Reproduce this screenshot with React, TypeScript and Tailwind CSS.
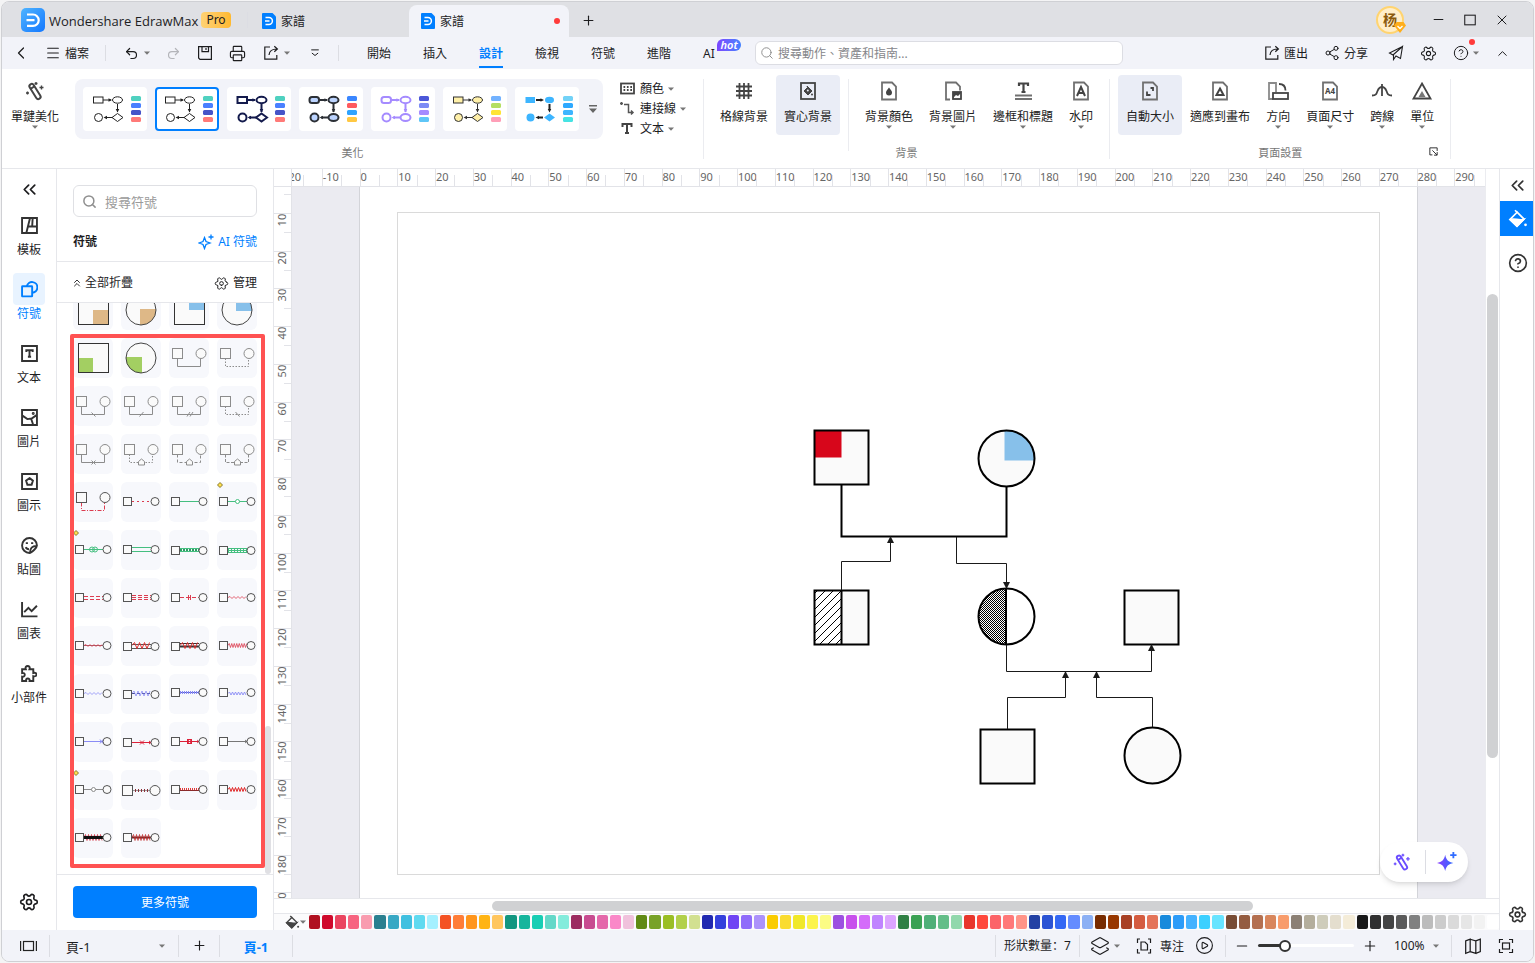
import { useState } from "react";
import type { ReactNode } from "react";
import {
  ChevronLeft,
  ChevronUp,
  ChevronsLeft,
  ChevronsUp,
  CircleHelp,
  CirclePlay,
  Layers2,
  Menu,
  Minus,
  Plus,
  Printer,
  Redo2,
  Search,
  Settings,
  Share2,
  Undo2,
  X,
} from "lucide-react";
import clsx from "clsx";

/* ---------- small drawings ---------- */

type IconProps = { children: ReactNode; size?: number; width?: number; className?: string };

function Icon({ children, size = 16, width = 1.2, className }: IconProps) {
  return (
    <svg
      width={size}
      height={size}
      viewBox="0 0 16 16"
      fill="none"
      stroke="currentColor"
      strokeWidth={width}
      className={clsx("shrink-0", className)}
    >
      {children}
    </svg>
  );
}

function Caret({ className }: { className?: string }) {
  return (
    <svg width="6" height="4" viewBox="0 0 6 4" className={clsx("shrink-0 fill-[#777]", className)}>
      <path d="M0 0.5h6L3 3.8z" />
    </svg>
  );
}

function Divider({ className }: { className?: string }) {
  return <div className={clsx("w-px shrink-0 bg-[#dcdde3]", className)} />;
}

function DocIcon() {
  return (
    <svg width="14" height="16" viewBox="0 0 14 16" className="shrink-0">
      <path d="M1 0h9.5L14 3.5V15a1 1 0 0 1-1 1H1a1 1 0 0 1-1-1V1a1 1 0 0 1 1-1z" fill="#007fff" />
      <path d="M3.5 4.6H7a3.4 3.4 0 0 1 0 6.800H3.500M3 8h4.500" fill="none" stroke="#fff" strokeWidth="1.500" />
    </svg>
  );
}

function WandIcon({ size = 24 }: { size?: number }) {
  return (
    <svg width={size} height={size} viewBox="0 0 24 24" fill="none" stroke="currentColor" strokeWidth="2">
      <rect x="9.700" y="4" width="4.600" height="17" rx="2.300" transform="rotate(-32 12 12.500)" />
      <path d="M7.600 9.800l3.600-2.300" />
      <path d="M13 3v3M11.500 4.500h3M18.500 6.500v4M16.500 8.500h4M4.500 12.500v3M3 14h3" strokeWidth="1.400" />
    </svg>
  );
}

function ExportIcon() {
  return (
    <Icon>
      <path d="M7 2H1.800v12.200h12V10" />
      <path d="M6 10c.3-4 3-6 8-6M11.300 1.200L14.400 4l-3.100 2.800" />
    </Icon>
  );
}

function BucketIcon({ size = 18 }: { size?: number }) {
  return (
    <Icon size={size} width={1.4}>
      <path d="M5.600 1l2 2" />
      <path d="M7.300 2.600L1.600 8.300l5.600 5.500 5.600-5.700z" />
      <path d="M1.800 8.400c3-1 7 1 10.600 0l-5.200 5.200z" fill="currentColor" />
      <circle cx="14" cy="12.600" r="1.100" fill="currentColor" stroke="none" />
    </Icon>
  );
}

const ribbonIcons: Record<string, ReactNode> = {
  grid: <path d="M7.500 4v16M12 4v16M16.500 4v16M4 7.500h16M4 12h16M4 16.500h16" strokeWidth="1.800" />,
  solid: (
    <>
      <rect x="5" y="4" width="14" height="16" />
      <path d="M11 7l5 5-4 4-4-4 3.500-3.500z" fill="currentColor" strokeWidth="1" />
      <circle cx="11.800" cy="11.500" r="1" fill="#eaedf6" stroke="none" />
      <circle cx="16" cy="15.500" r="1" fill="currentColor" stroke="none" />
    </>
  ),
  color: (
    <>
      <path d="M5 3.500h10l4 4v13H5z" stroke="#707070" />
      <path d="M12 8.500c2 2.600 3 3.600 3 5a3 3 0 0 1-6 0c0-1.400 1-2.400 3-5z" fill="currentColor" stroke="none" />
    </>
  ),
  image: (
    <>
      <path d="M9 20.500H5v-17h10l4 4v4" stroke="#707070" />
      <rect x="12" y="13" width="8" height="7" />
      <path d="M12 19l3-3 2 1 3-3v-1h-8z" fill="currentColor" stroke="none" />
    </>
  ),
  border: (
    <>
      <path d="M8 7V4.500h9V7M12.500 4.500v9M10.500 13h4" strokeWidth="2.200" />
      <path d="M4 16.500h17M4 20h17" stroke="#707070" />
    </>
  ),
  mark: (
    <>
      <path d="M5 3.500h10l4 4v13H5z" stroke="#707070" />
      <path d="M8 17l4-9 4 9M9.500 14h5" strokeWidth="2" />
    </>
  ),
  auto: (
    <>
      <path d="M5 3.500h10l4 4v13H5z" stroke="#707070" />
      <path d="M12.500 9H15v3M9 12.500V16h3.500" strokeWidth="1.800" />
    </>
  ),
  fit: (
    <>
      <path d="M5 3.500h10l4 4v13H5z" stroke="#707070" />
      <path d="M12 9.500l3.500 6.500h-7z" strokeWidth="2" />
    </>
  ),
  orient: (
    <>
      <path d="M7 20H3V4h7v9" stroke="#8a8a8a" />
      <rect x="7" y="14" width="15" height="6" />
      <path d="M13 5c4 0 6.500 2.500 6.500 6.500" />
    </>
  ),
  wave: <path d="M2 16.500c4 0 4.500-1.500 5.500-4.500C8.500 9.500 10 8 12 8s3.500 1.500 4.500 4c1 3 1.500 4.500 5.500 4.500M12 5v12" />,
  unit: (
    <>
      <path d="M12 4.500L20.500 19.500h-17z" />
      <path d="M12 12l3.500 6h-7z" fill="#777" stroke="none" />
    </>
  ),
};

function RibbonIcon({ name }: { name: string }) {
  if (name === "wand") return <WandIcon />;
  if (name === "size") {
    return (
      <svg width="24" height="24" viewBox="0 0 24 24" fill="none" stroke="#707070" strokeWidth="1.8">
        <path d="M5 3.500h10l4 4v13H5z" />
        <text x="7" y="15" fontSize="8" fontWeight="700" fill="#444" stroke="none">
          A4
        </text>
      </svg>
    );
  }
  return (
    <svg width="24" height="24" viewBox="0 0 24 24" fill="none" stroke="currentColor" strokeWidth="1.8">
      {ribbonIcons[name]}
    </svg>
  );
}

/* ---------- title bar ---------- */

function TitleBar() {
  return (
    <header className="flex h-[35px] shrink-0 items-center bg-[#dfe0e4] pl-[19px] pr-[19px]">
      <svg width="24" height="24" viewBox="0 0 24 24" className="shrink-0">
        <defs>
          <linearGradient id="logo" x1="0" y1="0" x2="1" y2="1">
            <stop offset="0" stopColor="#4fb4ff" />
            <stop offset="1" stopColor="#1478ff" />
          </linearGradient>
        </defs>
        <rect width="24" height="24" rx="5" fill="url(#logo)" />
        <path d="M6 6.500h6a5.700 5.700 0 0 1 0 11.400H6M5.500 12.200h8" fill="none" stroke="#fff" strokeWidth="2.200" />
      </svg>
      <span className="ml-1 w-36 whitespace-nowrap pt-0.5 font-['Open_Sans',sans-serif] text-[13px]">
        Wondershare EdrawMax
      </span>
      <span className="ml-2 flex h-4 w-[30px] items-center justify-center rounded-sm bg-linear-to-r from-[#fed273] to-[#ffb92e]">
        Pro
      </span>
      <Divider className="ml-4 h-4 bg-[#c8c9ce]" />
      <button className="flex w-[161px] items-center gap-[5px] pl-[14px] pt-0.5">
        <DocIcon />
        <span className="pt-0.5">家譜</span>
      </button>
      <button className="flex h-8 w-40 items-center gap-[5px] self-end rounded-t-lg bg-[#f2f3f9] pl-3 pr-[9px]">
        <DocIcon />
        <span className="pt-0.5">家譜</span>
        <span className="ml-auto size-1.5 rounded-full bg-[#ff3b3b]" />
      </button>
      <button aria-label="New tab" className="ml-3 pt-0.5">
        <Plus size={15} strokeWidth={1.8} />
      </button>
      <div className="ml-auto flex items-center">
        <button className="relative mr-[18px] flex size-7 items-center justify-center rounded-full border-2 border-[#ffd470] bg-[#ffeec9] text-[14px] font-bold text-[#8a5a0c]">
          杨
          <svg width="12" height="11" viewBox="0 0 12 11" className="absolute -bottom-px -right-1">
            <path d="M2.500 0h7L12 3.500 6 11 0 3.500z" fill="#ffae1a" />
            <path d="M3.500 4L6 6.500 8.500 4" fill="none" stroke="#fff" strokeWidth="1.300" />
          </svg>
        </button>
        <button aria-label="Minimize" className="flex w-8 justify-center">
          <Minus size={15} strokeWidth={1.6} />
        </button>
        <button aria-label="Maximize" className="flex w-8 justify-center">
          <Icon size={14} width={1.2}>
            <rect x="2" y="2.500" width="12" height="11" />
          </Icon>
        </button>
        <button aria-label="Close" className="-mr-1 flex w-8 justify-center">
          <X size={16} strokeWidth={1.5} />
        </button>
      </div>
    </header>
  );
}

/* ---------- menu bar ---------- */

const menus = ["開始", "插入", "設計", "檢視", "符號", "進階", "AI"];

function MenuBar() {
  const [active, setActive] = useState("設計");

  return (
    <div className="flex h-8 shrink-0 items-center bg-[#f2f3f9] pl-[11px] pr-[23px]">
      <button aria-label="Back" className="flex w-4 justify-center">
        <ChevronLeft size={20} strokeWidth={1.5} className="shrink-0" />
      </button>
      <button className="ml-4 flex items-center gap-1">
        <Menu size={16} strokeWidth={1.6} />
        <span className="pt-0.5">檔案</span>
      </button>
      <Divider className="ml-4 h-4" />
      <div className="flex w-[232px] items-center">
        <button aria-label="Undo" className="ml-[18px] flex items-center gap-[5px]">
          <Undo2 size={15} strokeWidth={1.9} />
          <Caret />
        </button>
        <button aria-label="Redo" className="ml-4 text-[#b4b5ba]">
          <Redo2 size={15} strokeWidth={1.9} />
        </button>
        <button aria-label="Save" className="ml-4">
          <Icon>
            <path d="M1.600 1.600h12.800v12.800H3L1.600 13zM5 1.600v5h6.500v-5M9 3v2" />
          </Icon>
        </button>
        <button aria-label="Print" className="ml-4">
          <Printer size={17} strokeWidth={1.6} />
        </button>
        <button aria-label="Export" className="ml-[17px] flex items-center gap-[5px]">
          <ExportIcon />
          <Caret />
        </button>
        <button aria-label="More" className="ml-5">
          <Icon size={10} width={1.6}>
            <path d="M2 3h12M3 8l5 4 5-4" />
          </Icon>
        </button>
      </div>
      <Divider className="h-4" />
      <nav className="ml-3 flex h-full w-[404px]">
        {menus.map((item) => (
          <button
            key={item}
            onClick={() => setActive(item)}
            className={clsx(
              "relative flex h-full items-center px-4 pt-0.5",
              item === active && "font-bold text-[#007fff]"
            )}
          >
            {item}
            {item === active && <span className="absolute inset-x-4 bottom-px h-0.5 bg-[#007fff]" />}
            {item === "AI" && (
              <span className="absolute left-[30px] top-0.5 flex h-3 w-6 items-center justify-center rounded-t-full rounded-br-full bg-linear-to-r from-[#7a45ff] to-[#3f80ff] text-[11px] font-semibold italic text-white">
                hot
              </span>
            )}
          </button>
        ))}
      </nav>
      <label className="flex h-6 w-[368px] items-center gap-1 rounded-md border border-[#dcdde3] bg-white px-1">
        <Search size={14} strokeWidth={1.6} className="text-[#8a8a8a]" />
        <input
          aria-label="搜尋"
          placeholder="搜尋動作、資產和指南..."
          className="min-w-0 flex-1 pt-0.5 outline-none placeholder:text-[#85868a]"
        />
      </label>
      <div className="ml-auto flex items-center">
        <button className="flex items-center gap-1">
          <ExportIcon />
          <span className="pt-0.5">匯出</span>
        </button>
        <button className="ml-4 flex items-center gap-1">
          <Share2 size={16} strokeWidth={1.5} />
          <span className="pt-0.5">分享</span>
        </button>
        <button aria-label="Send" className="ml-5">
          <Icon>
            <path d="M14.500 1.500L1.500 8l3.500 2 9.500-8.500-2 12-4.500-2.500-2.500 3.500v-4.500" strokeWidth="1.100" />
          </Icon>
        </button>
        <button aria-label="Settings" className="ml-4">
          <Settings size={17} strokeWidth={1.5} className="rotate-90" />
        </button>
        <button aria-label="Help" className="relative ml-4 flex items-center gap-1">
          <CircleHelp size={16} strokeWidth={1.5} />
          <Caret />
          <span className="absolute -top-1.5 right-1 size-1.5 rounded-full bg-[#ff3b3b]" />
        </button>
        <button aria-label="Collapse ribbon" className="ml-4">
          <ChevronUp size={15} strokeWidth={1.6} />
        </button>
      </div>
    </div>
  );
}

/* ---------- ribbon ---------- */

type Theme = { line: string; fill: string; width: number; swatches: string[]; round?: boolean; solid?: boolean };

const themes: Theme[] = [
  { line: "#222", fill: "#fff", width: 1, swatches: ["#4fd1c0", "#4a80ff", "#4654c8", "#ff7a78"] },
  { line: "#222", fill: "#fff", width: 1, swatches: ["#4fd1c0", "#4a80ff", "#4654c8", "#ff7a78"] },
  { line: "#141b4d", fill: "#fff", width: 2, swatches: ["#4fd1c0", "#4a80ff", "#4654c8", "#ff7a78"] },
  { line: "#2c3036", fill: "#bcd4ff", width: 2, swatches: ["#3a86ff", "#ff5a5f", "#2ea3ff", "#ffc843"], round: true },
  { line: "#a58bff", fill: "#fff", width: 2, swatches: ["#4b57d8", "#7d8cf5", "#a58bff", "#5fc6f7"], round: true },
  { line: "#333", fill: "#fff0a8", width: 1, swatches: ["#72b2ff", "#b4df62", "#ffe436", "#ff9fb8"] },
  { line: "#222", fill: "#3db5ff", width: 2, swatches: ["#72d2f7", "#2ea9ff", "#3db5ff", "#46e3e3"], solid: true },
];

function ThemePreview({ line, fill, width, swatches, round, solid }: Theme) {
  return (
    <svg width="60" height="40" viewBox="2 2 60 40">
      <g stroke={line} strokeWidth={width} fill="none">
        <path d={solid ? "M21 13h5M34.500 17v5M28 30.500h-5" : "M20 13h8M34.500 17v8M30 30.500h-8"} />
      </g>
      <g fill={line}>
        <path d="M25.500 11.200l3.500 1.800-3.500 1.800zM32.700 22l1.800 3.500 1.800-3.500zM24 28.700l-3.500 1.800 3.500 1.800z" />
      </g>
      <g stroke={solid ? "none" : line} strokeWidth={width} fill={fill}>
        <rect x="10.500" y="10" width="9.500" height="6" rx={round ? 2.5 : 0} />
        <ellipse cx="34.500" cy="13" rx={solid ? 4.5 : 5} ry="3.200" />
        <circle cx="15.500" cy="30.500" r="4" />
        {round ? <ellipse cx="34.500" cy="30.500" rx="5" ry="3.500" /> : <path d="M34.500 26.500l5.500 4-5.500 4-5.500-4z" />}
      </g>
      {swatches.map((color, i) => (
        <rect key={i} x="48" y={9 + i * 7} width="10" height="5" rx="1.500" fill={color} />
      ))}
    </svg>
  );
}

type RibbonButtonProps = { icon: string; label: string; caret?: boolean; active?: boolean; className?: string };

function RibbonButton({ icon, label, caret, active, className }: RibbonButtonProps) {
  return (
    <button
      className={clsx(
        "flex h-[60px] shrink-0 flex-col items-center rounded px-2 pt-1 text-[#222]",
        active && "bg-[#eaedf6]",
        className
      )}
    >
      <span className="flex h-6 items-center text-[#444]">
        <RibbonIcon name={icon} />
      </span>
      <span className="mt-1.5 whitespace-nowrap">{label}</span>
      {caret && <Caret />}
    </button>
  );
}

function GroupLabel({ children }: { children: ReactNode }) {
  return <div className="mt-2.5 text-center text-[11px] leading-4 text-[#777]">{children}</div>;
}

function Ribbon() {
  const [theme, setTheme] = useState(1);

  return (
    <div className="flex h-[100px] shrink-0 border-b border-[#e6e7eb] bg-white pt-1.5">
      <section className="w-[701px] shrink-0">
        <div className="flex h-[60px]">
          <RibbonButton icon="wand" label="單鍵美化" caret className="w-[66px]" />
          <div className="ml-[7px] mt-1 flex h-[60px] items-center gap-2 rounded-lg bg-[#f2f3f9] pl-2">
            {themes.map((item, i) => (
              <button
                key={i}
                aria-label={`Theme ${i + 1}`}
                onClick={() => setTheme(i)}
                className={clsx("h-11 w-16 rounded border-2 bg-white", i === theme ? "border-[#007fff]" : "border-white")}
              >
                <ThemePreview {...item} />
              </button>
            ))}
            <button aria-label="More themes" className="flex w-4 justify-center pr-1">
              <svg width="8" height="8" viewBox="0 0 8 8" fill="#666">
                <path d="M0 0h8v1.500H0zM0 3.500h8L4 8z" />
              </svg>
            </button>
          </div>
          <div className="ml-[17px] mt-1">
            <button className="flex h-5 items-center">
              <Icon className="mr-1 text-[#444]" width={1.8}>
                <rect x="1" y="2.500" width="13" height="10" />
                <path d="M3.500 6h8.500M3.500 9h8.500" strokeDasharray="1.700 1.700" />
              </Icon>
              顏色
              <Caret className="ml-1" />
            </button>
            <button className="flex h-5 items-center">
              <Icon className="mr-1 text-[#555]" width={1.5}>
                <path d="M4 3.500h4.500v8H13M11 9.500l2 2-2 2" />
                <path d="M0 2.500h3M1.500 1v3" />
              </Icon>
              連接線
              <Caret className="ml-1" />
            </button>
            <button className="flex h-5 items-center">
              <Icon className="mr-1 text-[#444]" width={2}>
                <path d="M2.500 6V3h9v3M7 3v9.500M5 12h4" />
              </Icon>
              文本
              <Caret className="ml-1" />
            </button>
          </div>
        </div>
        <GroupLabel>美化</GroupLabel>
      </section>
      <Divider className="mt-1 h-20 bg-[#ebecf0]" />
      <section className="shrink-0">
        <div className="flex px-2">
          <RibbonButton icon="grid" label="格線背景" />
          <RibbonButton icon="solid" label="實心背景" active />
          <Divider className="-mb-4 mx-2 mt-1 bg-[#ebecf0]" />
          <RibbonButton icon="color" label="背景顏色" caret />
          <RibbonButton icon="image" label="背景圖片" caret />
          <RibbonButton icon="border" label="邊框和標題" caret />
          <RibbonButton icon="mark" label="水印" caret />
        </div>
        <GroupLabel>背景</GroupLabel>
      </section>
      <Divider className="mt-1 h-20 bg-[#ebecf0]" />
      <section className="relative shrink-0">
        <div className="flex px-2">
          <RibbonButton icon="auto" label="自動大小" active />
          <RibbonButton icon="fit" label="適應到畫布" />
          <RibbonButton icon="orient" label="方向" caret />
          <RibbonButton icon="size" label="頁面尺寸" caret />
          <RibbonButton icon="wave" label="跨線" caret />
          <RibbonButton icon="unit" label="單位" caret />
        </div>
        <GroupLabel>頁面設置</GroupLabel>
        <button aria-label="Page setup" className="absolute bottom-3 right-3">
          <Icon size={9} width={1.6}>
            <path d="M6 14H1.500V1.500h13V7M6 6l8 8M14.500 9v5.500H9" />
          </Icon>
        </button>
      </section>
      <Divider className="mt-1 h-20 bg-[#ebecf0]" />
    </div>
  );
}

/* ---------- left rail ---------- */

const railItems: { label: string; icon: ReactNode }[] = [
  {
    label: "模板",
    icon: <path d="M1 1h14v14H1zM8.500 1L5 15M6.500 9H15M11 1L10.500 9" />,
  },
  {
    label: "符號",
    icon: (
      <>
        <rect x="1" y="5" width="9.500" height="9.500" rx="0.500" />
        <path d="M5.500 5a5 5 0 1 1 5 6" />
      </>
    ),
  },
  {
    label: "文本",
    icon: <path d="M1 1h14v14H1zM5 6.500V5h6v1.500M8 5v6M6.500 11h3" />,
  },
  {
    label: "圖片",
    icon: (
      <>
        <path d="M1 1h14v14H1zM1 6l5 3.500L10 9l5-3.500M9.500 9l2 6" />
        <circle cx="11.500" cy="4.200" r="0.500" fill="currentColor" />
      </>
    ),
  },
  {
    label: "圖示",
    icon: <path d="M1 1h14v14H1zM8 4.800l3.200 2.400-1.200 3.800H6L4.800 7.200z" />,
  },
  {
    label: "貼圖",
    icon: (
      <>
        <path d="M15 8a7 7 0 1 0-7 7c1 0 2.500-1 4.500-3S15 9 15 8zM8.500 14.500c0-4 2-6 6-6M4.500 9.500c.5 1.500 1.500 2 3 2" />
        <path d="M5.500 5v1.500M10.500 5v1.500" strokeWidth="2" />
      </>
    ),
  },
  {
    label: "圖表",
    icon: <path d="M1 1v13.500h14.500M3 10.500l4-4 3 3L15 4.500" />,
  },
  {
    label: "小部件",
    icon: (
      <path d="M2 4h3.500c-.8-2 .3-3 1.700-3s2.500 1 1.700 3h3.600v3.500c2-.5 3 .3 3 1.500s-1 2-3 1.600V15H9c.3-1.500-.5-2.300-1.700-2.300S5.500 13.500 5.800 15H2v-4c1.600.3 2.500-.6 2.500-1.800S3.600 7.300 2 7.600z" />
    ),
  },
];

function LeftRail() {
  const [active, setActive] = useState("符號");

  return (
    <aside className="flex w-[55px] shrink-0 flex-col items-center border-r border-[#e6e7eb] bg-white">
      <button aria-label="Collapse" className="flex h-10 items-center">
        <ChevronsLeft size={21} strokeWidth={2} />
      </button>
      {railItems.map(({ label, icon }) => (
        <button
          key={label}
          onClick={() => setActive(label)}
          className={clsx("flex h-16 flex-col items-center", active === label && "text-[#007fff]")}
        >
          <span
            className={clsx(
              "mb-px flex size-8 items-center justify-center rounded",
              active === label ? "bg-[#e8f3ff]" : "text-[#333]"
            )}
          >
            <Icon size={17} width={1.8}>
              {icon}
            </Icon>
          </span>
          {label}
        </button>
      ))}
      <button aria-label="Settings" className="mb-3 mt-auto flex size-8 items-center justify-center">
        <Settings size={20} strokeWidth={2} className="rotate-90" />
      </button>
    </aside>
  );
}

/* ---------- symbol library ---------- */

const RED = "#dc3d50";
const GREEN = "#45bf80";
const VIOLET = "#8a8cf5";
const GREY = "#8c8c8c";

function zigzag(x1: number, x2: number, y: number, step: number, amp: number) {
  let d = `M${x1} ${y}`;
  let up = true;
  for (let x = x1 + step; x <= x2; x += step) {
    d += `L${x} ${y + (up ? -amp : amp)}`;
    up = !up;
  }
  return d;
}

// quarter-filled square or circle
function Quarter({ round, color, at }: { round?: boolean; color: string; at: "br" | "tr" | "bl" }) {
  const x = at === "bl" ? 5 : 20;
  const y = at === "tr" ? 5 : 20;
  const arcs = {
    br: "M19 19h16A15 15 0 0 1 19 35z",
    tr: "M19 21V5A15 15 0 0 1 35 21z",
    bl: "M21 19H5A15 15 0 0 0 21 35z",
  };
  return round ? (
    <>
      <circle cx="20" cy="20" r="15" fill="#fafafa" />
      <path d={arcs[at]} fill={color} />
      <circle cx="20" cy="20" r="15" fill="none" stroke="#444" />
    </>
  ) : (
    <>
      <rect x="5.500" y="5.500" width="30" height="29" fill="#fafafa" />
      <rect x={x} y={y} width="15" height="15" fill={color} />
      <rect x="5.500" y="5.500" width="30" height="29" fill="none" stroke="#333" />
    </>
  );
}

type ElbowProps = { color?: string; dash?: string; mark?: ReactNode; dark?: boolean };

function Elbow({ color = GREY, dash, mark, dark }: ElbowProps) {
  const outline = dark ? "#555" : GREY;
  return (
    <g fill="none">
      <path d="M8.500 20.500v8h23v-8" stroke={color} strokeDasharray={dash} />
      <rect x="3.500" y="10.500" width="10" height="10" stroke={outline} fill="#fafafa" />
      <circle cx="32" cy="15.500" r="5" stroke={outline} fill="#fafafa" />
      {mark}
    </g>
  );
}

function House() {
  return <path d="M17.500 31v-3.500l3-2.500 3 2.500V31z" stroke={GREY} fill="#fafafa" />;
}

function Link({ children, handle, big, y = 19 }: { children: ReactNode; handle?: boolean; big?: boolean; y?: number }) {
  const r = big ? 5 : 4;
  return (
    <g fill="none">
      {children}
      <rect x={6.5 - r} y={y + 0.5 - r} width={r * 2} height={r * 2} stroke="#555" fill="#fafafa" />
      <circle cx="34" cy={y + 0.5} r={r} stroke="#555" fill="#fafafa" />
      {handle && <path d="M3 0.500L5.500 3 3 5.500 0.500 3z" stroke="#6b5a10" strokeWidth="0.800" fill="#ffe04d" />}
    </g>
  );
}

function Line({ color, y = 19.5, dash, width = 1 }: { color: string; y?: number; dash?: string; width?: number }) {
  return <path d={`M11 ${y}h19`} stroke={color} strokeDasharray={dash} strokeWidth={width} />;
}

function Zig({ color, step = 2, amp = 1, width = 1 }: { color: string; step?: number; amp?: number; width?: number }) {
  return <path d={zigzag(11, 30, 19.5, step, amp)} stroke={color} strokeWidth={width} />;
}

const symbols: ReactNode[] = [
  <Quarter color="#deb887" at="br" />,
  <Quarter round color="#deb887" at="br" />,
  <Quarter color="#87c0ea" at="tr" />,
  <Quarter round color="#87c0ea" at="tr" />,

  <Quarter color="#a3cf62" at="bl" />,
  <Quarter round color="#a3cf62" at="bl" />,
  <Elbow />,
  <Elbow dash="1.500 1.500" />,

  <Elbow mark={<path d="M18.500 26.500l4 4" stroke={GREY} />} />,
  <Elbow mark={<path d="M22.500 26l-4 4.500" stroke={GREY} />} />,
  <Elbow mark={<path d="M21 26l-3 4.500M24 26l-3 4.500" stroke={GREY} />} />,
  <Elbow dash="1.500 1.500" mark={<path d="M18.500 26l4 4.500" stroke={GREY} />} />,

  <Elbow mark={<path d="M18.500 26.500l4 4M22.500 26.500l-4 4" stroke={GREY} />} />,
  <Elbow dash="1.500 1.500" mark={<House />} />,
  <Elbow dash="3 2" mark={<House />} />,
  <Elbow dash="3 1.500" mark={<House />} />,

  <Elbow dark color={RED} dash="4 1.500 1 1.500" />,
  <Link><Line color={RED} dash="2 3" /></Link>,
  <Link><Line color={GREEN} /></Link>,
  <Link handle>
    <Line color={GREEN} />
    <circle cx="20.500" cy="19.500" r="2" stroke={GREEN} fill="#fff" />
  </Link>,

  <Link handle>
    <Line color={GREEN} />
    <circle cx="19" cy="19.500" r="2.500" stroke={GREEN} />
    <circle cx="22" cy="19.500" r="2.500" stroke={GREEN} />
  </Link>,
  <Link><Line color={GREEN} y={17.5} /><Line color={GREEN} y={21.5} /></Link>,
  <Link y={20}>
    <Line color={GREEN} y={18.5} /><Line color={GREEN} y={21.5} />
    <Line color="#2d9c63" y={20} dash="2 1" width={2} />
  </Link>,
  <Link y={20}>
    <Line color={GREEN} y={18.5} /><Line color={GREEN} y={20.5} /><Line color={GREEN} y={22.5} />
    <Line color={GREEN} y={20.5} dash="1 2" width={4} />
  </Link>,

  <Link><Line color={RED} y={18.5} dash="4 2" /><Line color={RED} y={21.5} dash="4 2" /></Link>,
  <Link>
    <Line color={RED} y={17.5} dash="4 2" /><Line color={RED} y={19.5} dash="4 2" /><Line color={RED} y={21.5} dash="4 2" />
  </Link>,
  <Link><Line color={RED} dash="4 2" /><path d="M19.500 17v5M21.500 17v5" stroke={RED} /></Link>,
  <Link><Zig color={RED} width={0.8} /></Link>,

  <Link><Line color="#a06068" /><Zig color={RED} width={0.8} /></Link>,
  <Link y={20}>
    <Line color="#555" y={18.5} /><Line color="#555" y={22.5} /><Zig color="#e03030" step={2.5} amp={3} />
  </Link>,
  <Link y={20}>
    <Line color="#333" y={17.5} /><Line color="#333" y={20.5} width={2} /><Zig color="#e03030" step={2.5} amp={3} />
  </Link>,
  <Link><Zig color={RED} step={1.25} amp={2} width={0.8} /></Link>,

  <Link><Zig color={VIOLET} width={0.8} /></Link>,
  <Link y={20}><Line color="#444a90" dash="3 2" /><Zig color={VIOLET} step={2} amp={2.5} width={0.8} /></Link>,
  <Link y={18}><Line color="#5a60d0" y={18.5} /><Line color={VIOLET} y={18.5} dash="1 1" width={3} /></Link>,
  <Link y={18}><Zig color={VIOLET} step={1.5} amp={1.5} width={0.9} /></Link>,

  <Link><Line color={VIOLET} /><path d="M27 17.500l3 4M30 17.500l-3 4" stroke={VIOLET} /></Link>,
  <Link y={20}>
    <Line color="#dc2038" y={20.5} />
    <path d="M19 18.500l4 4M23 18.500l-4 4M28 19l2 1.500-2 1.500" stroke="#dc2038" />
  </Link>,
  <Link>
    <Line color="#dc2038" />
    <rect x="18.500" y="17.500" width="4" height="4" stroke="#dc2038" />
    <path d="M18.500 17.500l4 4M22.500 17.500l-4 4M28 18l2 1.500-2 1.500" stroke="#dc2038" strokeWidth="0.800" />
  </Link>,
  <Link><Line color="#777" /><path d="M28 18l2 1.500-2 1.500" stroke="#777" /></Link>,

  <Link handle><Line color={GREY} /><circle cx="20.500" cy="19.500" r="2" stroke={GREY} fill="#fff" /></Link>,
  <Link big y={20}><Line color="#999" y={20.5} /><Line color="#8a3038" y={20.5} dash="1 2" width={3} /></Link>,
  <Link><Line color="#e03a3a" dash="1 1" width={3} /><Line color="#8a2a2a" y={20.5} /></Link>,
  <Link><Zig color="#e02020" step={1.5} amp={2} /></Link>,

  <Link><Zig color="#d03040" step={1.5} amp={3} width={0.8} /><Line color="#111" width={3} /></Link>,
  <Link><Line color="#6a2525" width={2} /><Zig color="#c03030" step={1.5} amp={3} width={0.8} /></Link>,
];

function SymbolPanel() {
  return (
    <aside className="flex w-[217px] shrink-0 flex-col border-r border-[#e6e7eb] bg-white">
      <div className="px-4 pt-4">
        <label className="flex h-8 items-center gap-2 rounded-md border border-[#dfe0e4] px-2">
          <Search size={15} strokeWidth={2.4} className="text-[#8f8f8f]" />
          <input
            aria-label="搜尋符號"
            placeholder="搜尋符號"
            className="min-w-0 flex-1 pt-0.5 text-[13px] outline-none placeholder:text-[#9a9a9a]"
          />
        </label>
      </div>
      <div className="flex h-[45px] items-center justify-between border-b border-[#e6e7eb] px-4 pt-1.5">
        <h2 className="font-bold">符號</h2>
        <button className="flex items-center gap-1 text-[#007fff]">
          <Icon width={1.3}>
            <path d="M6.500 3.500L8 7.500l4 1.500-4 1.500-1.500 4L5 10.500 1 9l4-1.500z" />
            <path d="M13 0.500v5M10.500 3h5" />
          </Icon>
          AI 符號
        </button>
      </div>
      <div className="flex h-[41px] shrink-0 items-center justify-between border-b border-[#e6e7eb] px-4 pt-0.5">
        <button className="flex items-center gap-0.5">
          <ChevronsUp size={12} strokeWidth={1.8} className="-ml-0.5" />
          全部折疊
        </button>
        <button className="flex items-center gap-1">
          <Settings size={15} strokeWidth={1.6} className="rotate-90" />
          管理
        </button>
      </div>
      <div className="relative min-h-0 flex-1 overflow-hidden">
        <div className="-mt-[13px] grid grid-cols-4 gap-2 px-4">
          {symbols.map((symbol, i) => (
            <button key={i} aria-label={`Symbol ${i + 1}`} className="size-10 rounded-md bg-[#f7f8fc]">
              <svg width="40" height="40" viewBox="0 0 40 40">
                {symbol}
              </svg>
            </button>
          ))}
        </div>
        <div className="absolute left-[13px] right-2 top-[31px] h-[534px] rounded-xs border-4 border-[#ff5252]" />
        <div className="absolute bottom-0 right-0.5 h-[148px] w-1.5 rounded-full bg-[#e0e0e4]" />
      </div>
      <div className="border-t border-[#e6e7eb] px-4 pb-3 pt-[11px]">
        <button className="h-8 w-full rounded bg-[#007fff] pt-0.5 text-white">更多符號</button>
      </div>
    </aside>
  );
}

/* ---------- canvas ---------- */

const columns = Array.from({ length: 32 }, (_, i) => (i - 2) * 10);
const rows = Array.from({ length: 20 }, (_, i) => i * 10);

function HorizontalRuler() {
  return (
    <div className="flex h-[18px] shrink-0 overflow-hidden border-b border-[#e2e3e8] bg-white">
      <div className="-ml-2 -mr-[7px] flex min-w-0 flex-1">
        {columns.map((n) => (
          <div key={n} className="flex min-w-0 flex-1 border-l border-[#e2e3e8]">
            <span className="w-1/2 whitespace-nowrap text-[11px] leading-4 text-[#666]">{n}</span>
            <span className="mt-1.5 flex-1 border-l border-[#e2e3e8]" />
          </div>
        ))}
      </div>
    </div>
  );
}

function VerticalRuler() {
  return (
    <div className="flex w-[18px] shrink-0 flex-col overflow-hidden border-r border-[#e2e3e8] bg-white">
      <div className="z-10 h-[18px] shrink-0 border-b border-[#e2e3e8] bg-white" />
      <div className="flex min-h-0 flex-1 flex-col overflow-hidden">
        <div className="-mb-8 -mt-3 flex min-h-0 flex-1 flex-col">
          {rows.map((n) => (
            <div key={n} className="flex min-h-0 flex-1 flex-col border-t border-[#e2e3e8]">
              <span className="h-1/2 rotate-180 self-start text-right text-[11px] leading-4 text-[#666] [writing-mode:vertical-rl]">
                {n > 0 && n}
              </span>
              <span className="ml-2.5 flex-1 border-t border-[#e2e3e8]" />
            </div>
          ))}
        </div>
      </div>
    </div>
  );
}

function FamilyTree() {
  return (
    <svg width="440" height="400" viewBox="780 410 440 400" fill="none" className="absolute left-[420px] top-[223px]">
      <defs>
        <pattern id="hatch" width="8" height="8" patternUnits="userSpaceOnUse">
          <path d="M-1 9L9 -1M-1 1L1 -1M7 9L9 7" stroke="#000" strokeWidth="1" />
        </pattern>
        <pattern id="checker" width="2" height="2" patternUnits="userSpaceOnUse">
          <rect width="2" height="2" fill="#fff" />
          <rect width="1" height="1" fill="#000" />
          <rect x="1" y="1" width="1" height="1" fill="#000" />
        </pattern>
      </defs>

      {/* fills */}
      <g fill="#fafafa">
        <rect x="814" y="430" width="55" height="55" />
        <circle cx="1006.500" cy="458.500" r="28" />
        <rect x="814" y="590" width="55" height="55" />
        <rect x="1124" y="590" width="55" height="55" />
        <rect x="980" y="729" width="55" height="55" />
        <circle cx="1152.500" cy="755.500" r="28" />
      </g>
      <rect x="815" y="431" width="26.500" height="26.500" fill="#d7061b" />
      <path d="M1004.500 460.500v-30a28 28 0 0 1 30 30z" fill="#87c0ea" />
      <rect x="815" y="591" width="26.500" height="53" fill="#fff" />
      <rect x="815" y="591" width="26.500" height="53" fill="url(#hatch)" />
      <path d="M1006 588.500a28 28 0 0 0 0 56z" fill="url(#checker)" shapeRendering="crispEdges" />

      {/* people */}
      <g stroke="#000" strokeWidth="2">
        <rect x="814.500" y="430.500" width="54" height="54" />
        <circle cx="1006.500" cy="458.500" r="28" />
        <path d="M841.500 485v51.500h165V486" />
        <rect x="814.500" y="590.500" width="54" height="54" />
        <path d="M841.500 591v53M1006 589v55" />
        <circle cx="1006.500" cy="616.500" r="28" />
        <rect x="1124.500" y="590.500" width="54" height="54" />
        <rect x="980.500" y="729.500" width="54" height="54" />
        <circle cx="1152.500" cy="755.500" r="28" />
      </g>

      {/* connectors */}
      <g stroke="#1a1a1a">
        <path d="M841.500 590v-28.500h49V540" />
        <path d="M956.500 537v26.500h50V586" />
        <path d="M1006.500 645v26.500h145V648" />
        <path d="M1007.500 729v-31.500h58V676" />
        <path d="M1152.500 727v-29.500h-56V676" />
      </g>
      <g fill="#1a1a1a">
        <path d="M890.500 536l3.500 7h-7z" />
        <path d="M1006.500 589l3.500-7h-7z" />
        <path d="M1151.500 644l3.500 7h-7z" />
        <path d="M1065.500 671l3.500 7h-7z" />
        <path d="M1096.500 671l3.500 7h-7z" />
      </g>
    </svg>
  );
}

const palette = [
  "#b01020", "#cf0a2c", "#ea4560", "#f76480", "#f99caf",
  "#2a8090", "#38a8c4", "#40c0e0", "#60daf0", "#a4f0ff",
  "#f45224", "#ff7d38", "#ff951c", "#ffb414", "#ffc65e",
  "#129680", "#16b59c", "#18ceb4", "#64d8c8", "#84ecdc",
  "#9c2c60", "#c84c90", "#e468aa", "#fa88c8", "#f0c2dc",
  "#608a14", "#78a228", "#9abe24", "#b2d04a", "#d2e090",
  "#2028b0", "#3440dc", "#7044f4", "#906cfa", "#ac92fa",
  "#facc00", "#fadc30", "#f0e828", "#fcf44c", "#fcfc84",
  "#9c50e0", "#c850ec", "#d46cfa", "#c084ff", "#dca4ff",
  "#308044", "#3ca254", "#50b078", "#64be88", "#92d8ac",
  "#e8362c", "#ff483c", "#fc6468", "#ff7878", "#ff9488",
  "#2442a4", "#2c54d4", "#3468f4", "#648cff", "#8cb0f4",
  "#782c00", "#983800", "#a84024", "#d45c40", "#e47458",
  "#188adc", "#2c9cf8", "#44b2ff", "#3cd0ff", "#68e4ff",
  "#784c34", "#945c40", "#b47050", "#d8865c", "#f89c6c",
  "#8c8074", "#b4ae9c", "#ceccba", "#e4dece", "#f4ecd8",
  "#181818", "#303030", "#444444", "#5a5a5a", "#808080",
  "#bcbcbc", "#cccccc", "#dadada", "#e6e6e6", "#f2f2f2", "#ffffff",
];

function Canvas() {
  return (
    <main className="flex min-w-0 flex-1 flex-col bg-white">
      <div className="flex min-h-0 flex-1">
        <VerticalRuler />
        <div className="flex min-w-0 flex-1 flex-col">
          <HorizontalRuler />
          <div className="relative flex min-h-0 flex-1 overflow-hidden bg-[#ebebf1] px-[67px]">
            <div className="relative flex flex-1 border-x border-[#d3d4d9] bg-white px-[37px] pb-[23px] pt-[25px]">
              <div className="flex-1 border border-[#dadada]" />
              <FamilyTree />
            </div>
            <div className="absolute bottom-4 right-[17px] flex h-10 w-[88px] items-center justify-evenly rounded-full bg-white shadow-md">
              <button aria-label="AI beautify" className="text-[#6a4cff]">
                <WandIcon size={22} />
              </button>
              <Divider className="h-6" />
              <button aria-label="AI assistant">
                <svg width="20" height="20" viewBox="0 0 22 22">
                  <defs>
                    <linearGradient id="spark" x1="0" y1="0" x2="1" y2="0">
                      <stop offset="0" stopColor="#8a3cff" />
                      <stop offset="1" stopColor="#2f6bff" />
                    </linearGradient>
                  </defs>
                  <path
                    d="M9 3c1 5.500 3.500 8 9 9-5.500 1-8 3.500-9 9-1-5.500-3.500-8-9-9 5.500-1 8-3.500 9-9z"
                    fill="url(#spark)"
                  />
                  <path d="M18 0v7M14.500 3.500h7" stroke="#2f6bff" strokeWidth="2" />
                </svg>
              </button>
            </div>
          </div>
        </div>
        <div className="flex w-[14px] shrink-0 border-l border-[#ebecf0] px-px pb-[140px] pt-[125px]">
          <div className="flex-1 rounded-full bg-[#d0d1d3]" />
        </div>
      </div>
      <div className="flex h-4 shrink-0 border-y border-[#e6e7eb] py-0.5 pl-[218px] pr-[246px]">
        <div className="flex-1 rounded-full bg-[#d0d1d3]" />
      </div>
      <div className="flex h-4 shrink-0 items-center bg-[#fbfbfc] pl-[11px] pr-px">
        <button aria-label="Fill" className="flex w-6 items-center text-[#444]">
          <BucketIcon size={15} />
          <Caret />
        </button>
        <div className="flex flex-1 gap-0.5">
          {palette.map((color) => (
            <button
              key={color}
              aria-label={color}
              className="h-3.5 flex-1 rounded-[2px]"
              style={{ backgroundColor: color }}
            />
          ))}
        </div>
      </div>
    </main>
  );
}

function RightRail() {
  return (
    <aside className="flex w-[34px] shrink-0 flex-col items-center border-l border-[#e6e7eb] bg-white text-[#333]">
      <button aria-label="Expand" className="flex h-8 items-center pl-0.5">
        <ChevronsLeft size={21} strokeWidth={2} />
      </button>
      <button aria-label="Fill" className="flex h-[35px] w-full items-center justify-center bg-[#007fff] pl-0.5 text-white">
        <BucketIcon size={20} />
      </button>
      <button aria-label="Help" className="flex h-[54px] items-center pl-0.5">
        <CircleHelp size={20} strokeWidth={2} />
      </button>
      <button aria-label="Settings" className="mt-auto flex h-8 items-center pl-0.5">
        <Settings size={19} strokeWidth={2} className="rotate-90" />
      </button>
    </aside>
  );
}

/* ---------- status bar ---------- */

function StatusBar() {
  const [zoom, setZoom] = useState(100);

  return (
    <footer className="flex h-[31px] shrink-0 items-center bg-[#f2f3f9] pl-[18px] pr-[19px]">
      <button aria-label="Page view">
        <svg width="17" height="12" viewBox="0 0 17 12" fill="none" stroke="#222" strokeWidth="1.200">
          <path d="M0.600 1v10M16.400 1v10" />
          <rect x="3.500" y="1.500" width="10" height="9" />
        </svg>
      </button>
      <Divider className="ml-3 h-[22px]" />
      <div className="relative flex w-32 items-center">
        <select aria-label="Page" className="w-full appearance-none pl-4 pt-0.5 text-[13px] outline-none">
          <option>頁-1</option>
        </select>
        <Caret className="pointer-events-none absolute right-[13px]" />
      </div>
      <Divider className="h-[22px]" />
      <button aria-label="Add page" className="flex w-10 justify-center">
        <Plus size={15} strokeWidth={1.8} />
      </button>
      <Divider className="h-[22px]" />
      <button className="w-[72px] pt-0.5 text-center text-[13px] font-bold text-[#007fff]">頁-1</button>
      <Divider className="h-[22px]" />

      <div className="ml-auto flex h-[22px] items-center">
        <Divider className="h-full" />
        <span className="w-[83px] whitespace-nowrap pl-2 pt-px font-['Noto_Sans','Noto_Sans_CJK_SC',sans-serif]">
          形狀數量：7
        </span>
        <Divider className="h-full" />
        <button aria-label="Layers" className="ml-2.5 flex items-center gap-1">
          <Layers2 size={20} strokeWidth={1.4} />
          <Caret />
        </button>
        <button className="ml-4 flex items-center gap-2">
          <Icon>
            <path d="M4 1H1.500v4M12 1h2.500v4M1.500 11v4H4M14.500 11v4H12" />
            <path d="M5 4h4l2.500 2.500V12H5z" />
          </Icon>
          <span className="pt-0.5">專注</span>
        </button>
        <button aria-label="Present" className="ml-[11px]">
          <CirclePlay size={19} strokeWidth={1.4} />
        </button>
        <Divider className="ml-[11px] h-full" />
        <button aria-label="Zoom out" className="ml-2">
          <Minus size={16} strokeWidth={1.7} />
        </button>
        <input
          type="range"
          aria-label="Zoom"
          min={0}
          max={400}
          value={zoom}
          onChange={(e) => setZoom(Number(e.target.value))}
          className="ml-2 h-[3px] w-24 appearance-none rounded-full bg-linear-to-r from-[#333] from-25% to-white to-25% [&::-webkit-slider-thumb]:size-3 [&::-webkit-slider-thumb]:appearance-none [&::-webkit-slider-thumb]:rounded-full [&::-webkit-slider-thumb]:border-2 [&::-webkit-slider-thumb]:border-[#333] [&::-webkit-slider-thumb]:bg-white"
        />
        <button aria-label="Zoom in" className="ml-2">
          <Plus size={16} strokeWidth={1.7} />
        </button>
        <button className="ml-4 flex w-[57px] items-center gap-2 pt-px">
          {zoom}%
          <Caret />
        </button>
        <Divider className="h-full" />
        <button aria-label="Map" className="ml-3">
          <Icon size={18}>
            <path
              d="M1.500 3.500l4-1.500v11l-4 1.500zM5.500 2l5 1.500v11l-5-1.500M10.500 3.500l4-1.500v11l-4 1.500"
              strokeWidth="1.100"
            />
          </Icon>
        </button>
        <button aria-label="Fit window" className="ml-4">
          <Icon>
            <path d="M5 1.500H1.500V5M11 1.500h3.500V5M1.500 11v3.500H5M14.500 11v3.500H11" />
            <rect x="4.500" y="5" width="7" height="6" />
          </Icon>
        </button>
      </div>
    </footer>
  );
}

export default function App() {
  return (
    <div className="h-screen bg-[#f4f4f5] p-px font-['Noto_Sans','Noto_Sans_CJK_TC',sans-serif] text-[12px] leading-4 text-[#1d1d1f]">
      <div className="flex h-full flex-col overflow-hidden rounded-lg border border-[#cfd0d4]">
        <TitleBar />
        <MenuBar />
        <Ribbon />
        <div className="flex min-h-0 flex-1">
          <LeftRail />
          <SymbolPanel />
          <Canvas />
          <RightRail />
        </div>
        <StatusBar />
      </div>
    </div>
  );
}
